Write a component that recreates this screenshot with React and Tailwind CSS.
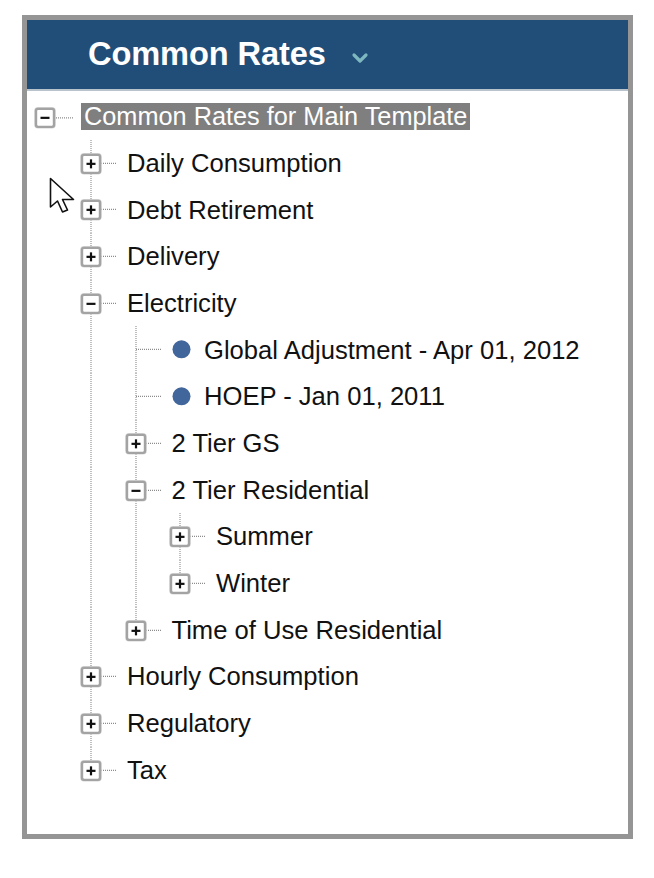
import React from "react";

const ROW_H = 46.7;
const MID = ROW_H / 2;
const DOT = { stroke: "#8c8c8c", strokeWidth: 1.1, strokeDasharray: "1 1" };

const tree = {
    label: "Common Rates for Main Template",
    children: [
        { label: "Daily Consumption", collapsed: true },
        { label: "Debt Retirement", collapsed: true },
        { label: "Delivery", collapsed: true },
        {
            label: "Electricity",
            children: [
                { label: "Global Adjustment - Apr 01, 2012" },
                { label: "HOEP - Jan 01, 2011" },
                { label: "2 Tier GS", collapsed: true },
                {
                    label: "2 Tier Residential",
                    children: [
                        { label: "Summer", collapsed: true },
                        { label: "Winter", collapsed: true }
                    ]
                },
                { label: "Time of Use Residential", collapsed: true }
            ]
        },
        { label: "Hourly Consumption", collapsed: true },
        { label: "Regulatory", collapsed: true },
        { label: "Tax", collapsed: true }
    ]
};

// flatten the expanded tree into rows with guide-line info
const flatten = (nodes, level, guides, out) => {
    nodes.forEach((node, i) => {
        const last = i === nodes.length - 1;
        const type = node.collapsed ? "plus" : node.children ? "minus" : "leaf";
        out.push({ label: node.label, level, type, last, guides });
        if (node.children) flatten(node.children, level + 1, [...guides, !last], out);
    });
    return out;
};

const rows = flatten(tree.children, 1, [], []);

const ToggleBox = ({ x, y, open }) => (
    <g>
        <rect x={x - 1} y={y - 1} width="20" height="20" rx="3" fill="none" stroke="#d6d6d6" strokeWidth="1.5" />
        <rect x={x} y={y} width="18" height="18" rx="2" fill="#fff" stroke="#a3a3a3" strokeWidth="2.4" />
        <line x1={x + 4.5} x2={x + 13.5} y1={y + 9} y2={y + 9} stroke="#111" strokeWidth="2.2" />
        {!open && <line x1={x + 9} x2={x + 9} y1={y + 4.5} y2={y + 13.5} stroke="#111" strokeWidth="2.2" />}
    </g>
);

const Guide = ({ on }) => (
    <svg width="44.5" height={ROW_H} className="shrink-0">
        {on && <line x1="22" x2="22" y1="0" y2={ROW_H} style={DOT} />}
    </svg>
);

const Connector = ({ type, last }) => {
    const leaf = type === "leaf";
    return (
        <svg width={leaf ? 90.5 : 58} height={ROW_H} className="shrink-0">
            <line x1="22" x2="22" y1="0" y2={last ? MID : ROW_H} style={DOT} />
            <line x1="22" x2={leaf ? 48 : 47} y1={MID} y2={MID} style={DOT} />
            {leaf ? (
                <circle cx="67.5" cy={MID} r="9" fill="#41669b" />
            ) : (
                <ToggleBox x={13} y={MID - 8.5} open={type === "minus"} />
            )}
        </svg>
    );
};

const Cursor = () => (
    <svg width="30" height="38" viewBox="0 0 30 38" className="absolute left-[49px] top-[177px]">
        <path d="M1.5 1.5 L1.5 30 L8.5 24 L13.5 35 L18.5 33 L13.5 22.5 L24.5 22.5 Z" fill="#fff" stroke="#111" strokeWidth="1.6" strokeLinejoin="round" />
    </svg>
);

export default function App() {
    return (
        <div className="relative min-h-[878px] bg-white pt-[15px] pl-[22px]" style={{ fontFamily: '"Liberation Sans", Arial, sans-serif' }}>
            <div className="w-[611px] h-[824px] border-[5px] border-[#959595] bg-white">
                {/* Header */}
                <div className="flex items-center h-[71px] pl-[61px] bg-[#214e78] border-b-2 border-[#b9c3cb]">
                    <span className="text-[32.6px] font-bold text-white tracking-[-0.1px]">Common Rates</span>
                    <svg width="18" height="12" viewBox="0 0 18 12" className="ml-[25px] mt-[6px]">
                        <path d="M3 3 L9 9 L15 3" fill="none" stroke="#7db7bf" strokeWidth="3.2" strokeLinecap="round" strokeLinejoin="round" />
                    </svg>
                </div>

                {/* Tree */}
                <div className="pt-[2px] text-[25.6px] text-[#111]">
                    <div className="flex items-center h-[46.7px]">
                        <svg width="54" height={ROW_H} className="shrink-0">
                            <ToggleBox x={9} y={MID - 7.5} open />
                            <line x1="29" x2="47" y1={MID + 1.5} y2={MID + 1.5} style={DOT} />
                        </svg>
                        <span className="h-[27px] leading-[27px] px-[3px] bg-[#7f7f7f] text-white text-[25.3px] whitespace-nowrap">
                            {tree.label}
                        </span>
                    </div>
                    {rows.map((row) => (
                        <div key={row.label} className="flex h-[46.7px] pl-[42px]">
                            {row.guides.map((on, i) => (
                                <Guide key={i} on={on} />
                            ))}
                            <Connector type={row.type} last={row.last} />
                            <span className="self-center whitespace-nowrap">{row.label}</span>
                        </div>
                    ))}
                </div>
            </div>
            <Cursor />
        </div>
    );
}
